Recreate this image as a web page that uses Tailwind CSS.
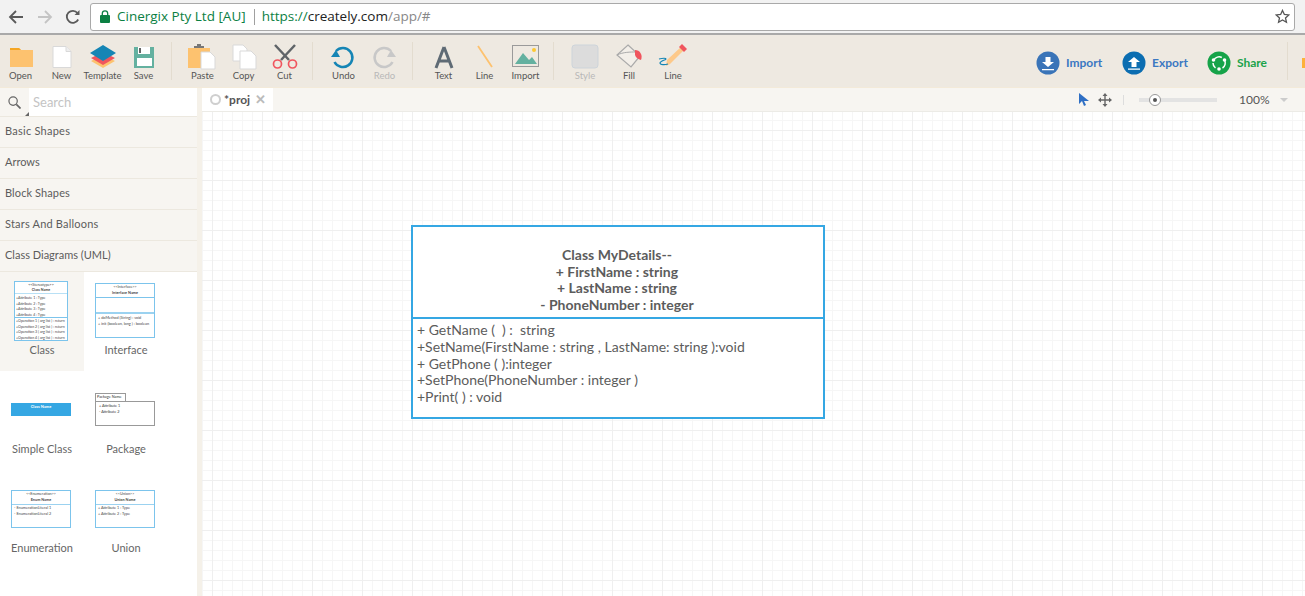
<!DOCTYPE html>
<html lang="en">

<head>
    <meta charset="UTF-8">
    <meta name="viewport" content="width=device-width, initial-scale=1.0">
    <title>Creately</title>
    <script src="https://cdn.jsdelivr.net/npm/@tailwindcss/browser@4"></script>
</head>

<body class="h-[596px] w-[1305px] overflow-hidden bg-white font-['Lato',sans-serif] text-[#555]">
    <!-- browser bar -->
    <div class="h-[35px] flex items-center bg-[#f2f2f2] border-b-2 border-[#a9a9a9]">
        <div class="w-[90px] h-[33px] flex items-center pl-[8px] gap-[13px] shrink-0">
            <svg class="w-[16px] h-[16px]" viewBox="0 0 16 16" fill="none" stroke="#5a5a5a" stroke-width="1.8"><path d="M15 8H2M8 2 2 8l6 6" /></svg>
            <svg class="w-[16px] h-[16px]" viewBox="0 0 16 16" fill="none" stroke="#c4c4c4" stroke-width="1.8"><path d="M1 8h13M8 2l6 6-6 6" /></svg>
            <svg class="w-[16px] h-[16px] -ml-[1px]" viewBox="0 0 16 16" fill="none" stroke="#5a5a5a" stroke-width="1.8"><path d="M13.2 10.5A6 6 0 1 1 12.5 4" /><path d="M14.5 1v5h-5z" fill="#5a5a5a" stroke="none" /></svg>
        </div>
        <div class="w-[1205px] h-[28px] flex items-center bg-white border border-[#a9a9a9] rounded-[3px] pl-[9px] pr-[4px] text-[14px] font-['Open_Sans',sans-serif]">
            <svg class="w-[10px] h-[13px] mr-[7px]" viewBox="0 0 10 13"><path d="M2.3 6V3.6a2.7 2.7 0 0 1 5.4 0V6" fill="none" stroke="#0b8043" stroke-width="1.3" /><rect y="5" width="10" height="8" rx="1" fill="#0b8043" /></svg>
            <span class="text-[#0b8043] text-[13.5px]">Cinergix Pty Ltd [AU]</span>
            <span class="w-px h-[16px] bg-[#a0a0a0] ml-[8px] mr-[7px]"></span>
            <span class="text-[13.5px] text-[#0b8043]">https://<span class="text-[#222]">creately.com</span><span class="text-[#888]">/app/#</span></span>
            <svg class="w-[15px] h-[15px] ml-auto" viewBox="0 0 16 16" fill="none" stroke="#555" stroke-width="1.4"><path d="m8 1.5 2 4.3 4.7.5-3.5 3.2 1 4.6L8 11.7l-4.2 2.4 1-4.6L1.300 6.300 6 5.800z" /></svg>
        </div>
    </div>

    <!-- toolbar -->
    <div class="h-[52px] flex bg-[#eee9e1] text-[9.5px] text-[#555] leading-[12px]">
        <div class="w-[164px] flex">
            <div class="w-[41px] flex flex-col items-center pt-[9px]">
                <svg class="w-[30px] h-[26px]" viewBox="0 0 30 26"><path d="M4 4h9l2 2h12v17H4z" fill="#fdc26f" /><path d="M4 4h9l2 2H4z" fill="#f5a623" /></svg>
                <span>Open</span>
            </div>
            <div class="w-[41px] flex flex-col items-center pt-[9px]">
                <svg class="w-[30px] h-[26px]" viewBox="0 0 30 26"><path d="M6 2.500h13l5 5v16H6z" fill="#fff" stroke="#d9d9d9" /><path d="M19 2.500v5h5" fill="#eee" stroke="#d9d9d9" /></svg>
                <span>New</span>
            </div>
            <div class="w-[41px] flex flex-col items-center pt-[9px]">
                <svg class="w-[30px] h-[26px]" viewBox="0 0 30 26"><path d="m15 11 12 6-12 7-12-7z" fill="#fdc26f" /><path d="m15 8 12 6-12 7-12-7z" fill="#f0555e" /><path d="m15 1 13 8-13 8L2 9z" fill="#1585b5" /></svg>
                <span>Template</span>
            </div>
            <div class="w-[41px] flex flex-col items-center pt-[9px]">
                <svg class="w-[30px] h-[26px]" viewBox="0 0 30 26"><path d="M5 3h20v21H5z" fill="#64b1a0" /><path d="M9 3h12v7H9zM8 14h15v8H8z" fill="#fff" /><path d="M10 4h2v5h-2z" fill="#666" /></svg>
                <span>Save</span>
            </div>
        </div>
        <div class="w-px h-[38px] mt-[7px] mx-[7px] bg-[#e3dccf]"></div>
        <div class="w-[123px] flex ml-[3px]">
            <div class="w-[41px] flex flex-col items-center pt-[9px]">
                <svg class="w-[30px] h-[26px]" viewBox="0 0 30 26"><path d="M0 4h22v20H0z" fill="#fdc26f" /><path d="M6 4h10V2h-3V0H9v2H6z" fill="#777" /><path d="M13 8h9l5 5v12H13z" fill="#fff" stroke="#d9d9d9" /></svg>
                <span>Paste</span>
            </div>
            <div class="w-[41px] flex flex-col items-center pt-[9px]">
                <svg class="w-[30px] h-[26px]" viewBox="0 0 30 26"><path d="M4 1h10l4 4v12H4z" fill="#fff" stroke="#d9d9d9" /><path d="M11 7h11l5 5v13H11z" fill="#fff" stroke="#d9d9d9" /></svg>
                <span>Copy</span>
            </div>
            <div class="w-[41px] flex flex-col items-center pt-[9px]">
                <svg class="w-[30px] h-[26px]" viewBox="0 0 30 26"><path d="M5 1l14 15M25 1 11 16" stroke="#5f6468" stroke-width="2.500" fill="none" /><circle cx="7.500" cy="20" r="4" fill="none" stroke="#f0555e" stroke-width="1.700" /><circle cx="22.500" cy="20" r="4" fill="none" stroke="#f0555e" stroke-width="1.700" /></svg>
                <span>Cut</span>
            </div>
        </div>
        <div class="w-px h-[38px] mt-[7px] mx-[7px] bg-[#e3dccf]"></div>
        <div class="w-[82px] flex ml-[3px]">
            <div class="w-[41px] flex flex-col items-center pt-[9px]">
                <svg class="w-[30px] h-[26px] -translate-x-[2px]" viewBox="0 0 30 26"><path d="M9 7a9.500 9.500 0 1 1-1.500 11" fill="none" stroke="#1585b5" stroke-width="2.500" /><path d="M4 13h9l-4-7z" fill="#1585b5" /></svg>
                <span>Undo</span>
            </div>
            <div class="w-[41px] flex flex-col items-center pt-[9px] text-[#b8b8b8]">
                <svg class="w-[30px] h-[26px]" viewBox="0 0 30 26"><path d="M21 7a9.500 9.500 0 1 0 1.500 11" fill="none" stroke="#c8c8c8" stroke-width="2.500" /><path d="M26 13h-9l4-7z" fill="#c8c8c8" /></svg>
                <span>Redo</span>
            </div>
        </div>
        <div class="w-px h-[38px] mt-[7px] mx-[7px] bg-[#e3dccf]"></div>
        <div class="w-[123px] flex ml-[3px]">
            <div class="w-[41px] flex flex-col items-center pt-[9px]">
                <svg class="w-[30px] h-[26px]" viewBox="0 0 30 26"><path d="M15 3 7 24M15 3l8 21M10 17h10" fill="none" stroke="#5f6b75" stroke-width="3" /></svg>
                <span>Text</span>
            </div>
            <div class="w-[41px] flex flex-col items-center pt-[9px]">
                <svg class="w-[30px] h-[26px]" viewBox="0 0 30 26"><path d="m8 2 14 21" fill="none" stroke="#fdc26f" stroke-width="1.800" /></svg>
                <span>Line</span>
            </div>
            <div class="w-[41px] flex flex-col items-center pt-[9px]">
                <svg class="w-[30px] h-[26px]" viewBox="0 0 30 26"><rect x="1.500" y="1.500" width="26" height="21" fill="none" stroke="#9a9a9a" /><path d="m4 20 8-11 6 7 3-3 5 7z" fill="#64b1a0" /><circle cx="23" cy="6" r="2" fill="#fdc832" /></svg>
                <span>Import</span>
            </div>
        </div>
        <div class="w-px h-[38px] mt-[7px] mx-[7px] bg-[#e3dccf]"></div>
        <div class="flex ml-[2px]">
            <div class="w-[44px] flex flex-col items-center pt-[9px] text-[#b8b8b8]">
                <svg class="w-[30px] h-[26px]" viewBox="0 0 30 26"><rect x="2" y="1" width="26" height="23" rx="3" fill="#dcdcdc" stroke="#cdd4da" /></svg>
                <span>Style</span>
            </div>
            <div class="w-[44px] flex flex-col items-center pt-[9px]">
                <svg class="w-[30px] h-[26px]" viewBox="0 0 30 26"><path d="m14 1 12 11-9 11L3 11z" fill="#f3efe9" stroke="#aaa" stroke-width="1.200" /><path d="M3 11c6-3 14-3 18-3" fill="none" stroke="#aaa" /><path d="M21 6c5 0 8 5 6 10-3-1-5-2-6-5z" fill="#f0555e" /></svg>
                <span>Fill</span>
            </div>
            <div class="w-[44px] flex flex-col items-center pt-[9px]">
                <svg class="w-[30px] h-[26px]" viewBox="0 0 30 26"><path d="m12 20 15-15-3-3L9 16l-1 6z" fill="#fdc98a" /><path d="m24 0 5 5-3 3-5-5z" fill="#f0555e" /><path d="M1 15c4-1 7-1 7 0s-6 2-6 4 5 2 8 1" fill="none" stroke="#1585b5" stroke-width="1.200" /></svg>
                <span>Line</span>
            </div>
        </div>

        <div class="ml-auto flex items-center h-[52px] pt-[4px] text-[12px] font-bold leading-none">
            <div class="flex items-center mr-[20px] text-[#3b78c2]">
                <svg class="w-[24px] h-[24px] mr-[6px]" viewBox="0 0 24 24"><circle cx="12" cy="12" r="11.500" fill="#3a74b8" /><path d="M9.500 6h5v5H18l-6 5-6-5h3.500zM6 18h12v1.200H6z" fill="#fff" /></svg>
                <span>Import</span>
            </div>
            <div class="flex items-center mr-[19px] text-[#3b78c2]">
                <svg class="w-[24px] h-[24px] mr-[6px]" viewBox="0 0 24 24"><circle cx="12" cy="12" r="11.500" fill="#0b6db1" /><path d="M9.500 16h5v-5H18l-6-5-6 5h3.500zM6 17.500h12v1.200H6z" fill="#fff" /></svg>
                <span>Export</span>
            </div>
            <div class="flex items-center mr-[20px] text-[#1ba34a]">
                <svg class="w-[24px] h-[24px] mr-[6px]" viewBox="0 0 24 24"><circle cx="12" cy="12" r="11.500" fill="#16a349" /><path d="M6.800 9a6 6 0 0 1 8-2.500M17.500 9a6 6 0 0 1-2 8M8.500 17a6 6 0 0 1-2.500-5" fill="none" stroke="#fff" stroke-width="1.500" /><circle cx="12" cy="18" r="1.800" fill="#fff" /><circle cx="6.500" cy="9" r="1.800" fill="#fff" /><circle cx="17.500" cy="9" r="1.800" fill="#fff" /></svg>
                <span>Share</span>
            </div>
            <div class="w-px h-[38px] -mt-[4px] bg-[#e3dccf]"></div>
            <div class="w-[3px] h-[10px] ml-[14px] bg-[#fdb13b]"></div>
        </div>
    </div>

    <div class="h-[509px] flex border-t border-[#f3ead9]">
        <!-- sidebar -->
        <div class="w-[197px] shrink-0 text-[11px] text-[#5c5c5c]">
            <div class="h-[29px] flex bg-[#f7f5f1] border-b border-[#ece8df]">
                <div class="w-[29px] relative flex items-center justify-center">
                    <svg class="w-[13px] h-[13px]" viewBox="0 0 14 14" fill="none" stroke="#666" stroke-width="1.300"><circle cx="5.500" cy="5.500" r="4.500" /><path d="m9 9 4.500 4.500" stroke-width="1.800" /></svg>
                    <div class="absolute right-[0px] bottom-[0px] w-0 h-0 border-l-[4px] border-b-[4px] border-l-transparent border-b-[#666]"></div>
                </div>
                <div class="flex-1 bg-white pl-[4px] pt-[1px] flex items-center text-[13px] text-[#c4c4c4]">Search</div>
            </div>
            <div class="h-[31px] flex items-center pl-[5px] pb-[1px] tracking-[0.25px] bg-[#f7f5f1] border-b border-[#ece8df]">Basic Shapes</div>
            <div class="h-[31px] flex items-center pl-[5px] pb-[1px] bg-[#f7f5f1] border-b border-[#ece8df]">Arrows</div>
            <div class="h-[31px] flex items-center pl-[5px] pb-[1px] tracking-[0.1px] bg-[#f7f5f1] border-b border-[#ece8df]">Block Shapes</div>
            <div class="h-[31px] flex items-center pl-[5px] pb-[1px] tracking-[0.2px] bg-[#f7f5f1] border-b border-[#ece8df]">Stars And Balloons</div>
            <div class="h-[31px] flex items-center pl-[5px] pb-[1px] bg-[#f7f5f1] border-b border-[#ece8df]">Class Diagrams (UML)</div>

            <div class="grid grid-cols-[84px_84px] auto-rows-[99px] text-[11px] text-center text-[#666]">
                <div class="bg-[#f7f5f1] flex flex-col items-center pt-[9px]">
                    <div class="w-[54px] h-[60px] mr-[2px] bg-white border border-[#7cc4ec] text-[3.600px] leading-[5px] text-[#444] text-left">
                        <div class="text-center h-[12px] border-b border-[#b8e0f5]">&lt;&lt;Stereotype&gt;&gt;<br><b>Class Name</b></div>
                        <div class="h-[24px] border-b border-[#7cc4ec] pl-[1px] pt-[1px] leading-[5.500px]">+Attribute 1 : Type<br>+Attribute 2 : Type<br>+Attribute 3 : Type<br>+Attribute 4 : Type</div>
                        <div class="pl-[1px] whitespace-nowrap leading-[5.500px]">+Operation 1 ( arg list ) : return<br>+Operation 2 ( arg list ) : return<br>+Operation 3 ( arg list ) : return<br>+Operation 4 ( arg list ) : return</div>
                    </div>
                    <span class="mt-[1px]">Class</span>
                </div>
                <div class="flex flex-col items-center pt-[11px]">
                    <div class="w-[60px] h-[55px] mr-[2px] bg-white border border-[#7cc4ec] text-[3.800px] leading-[6px] text-[#444] text-left">
                        <div class="text-center h-[14px] border-b border-[#7cc4ec]">&lt;&lt;Interface&gt;&gt;<br><b>Interface Name</b></div>
                        <div class="h-[16px] border-b-2 border-[#9bd2f0]"></div>
                        <div class="pl-[2px] pt-[1px] whitespace-nowrap">+ doMethod (String) : void<br>+ init (boolean, long ) : boolean</div>
                    </div>
                    <span class="mt-[4px]">Interface</span>
                </div>
                <div class="flex flex-col items-center pt-[32px]">
                    <div class="w-[60px] h-[13px] mr-[2px] bg-[#35a7e3] text-[4px] leading-[8px] font-bold text-white">Class Name</div>
                    <span class="mt-[25px]">Simple Class</span>
                </div>
                <div class="flex flex-col items-center pt-[22px]">
                    <div class="w-[60px] mr-[2px] text-[3.800px] leading-[6px] text-[#333] text-left">
                        <div class="w-[31px] h-[8px] bg-white border border-[#999] border-b-0 whitespace-nowrap pl-[1px]">Package Name</div>
                        <div class="h-[25px] bg-white border border-[#999] pl-[3px] pt-[1px] leading-[5.500px]">+ Attribute 1<br>- Attribute 2</div>
                    </div>
                    <span class="mt-[15px]">Package</span>
                </div>
                <div class="flex flex-col items-center pt-[20px]">
                    <div class="w-[60px] h-[38px] mr-[2px] bg-white border border-[#7cc4ec] text-[3.800px] leading-[6px] text-[#444] text-left">
                        <div class="text-center h-[14px] border-b border-[#9bd2f0]">&lt;&lt;Enumeration&gt;&gt;<br><b>Enum Name</b></div>
                        <div class="pl-[2px]">- EnumerationLiteral 1<br>- EnumerationLiteral 2</div>
                    </div>
                    <span class="mt-[12px]">Enumeration</span>
                </div>
                <div class="flex flex-col items-center pt-[20px]">
                    <div class="w-[60px] h-[38px] mr-[2px] bg-white border border-[#7cc4ec] text-[3.800px] leading-[6px] text-[#444] text-left">
                        <div class="text-center h-[14px] border-b border-[#9bd2f0]">&lt;&lt;Union&gt;&gt;<br><b>Union Name</b></div>
                        <div class="pl-[2px]">+ Attribute 1 : Type<br>+ Attribute 2 : Type</div>
                    </div>
                    <span class="mt-[12px]">Union</span>
                </div>
            </div>
        </div>
        <div class="w-[5px] shrink-0 bg-[#f5f1e9]"></div>

        <!-- editor -->
        <div class="flex-1 flex flex-col">
            <div class="h-[24px] flex bg-[#f7f5f1] text-[#555] border-b border-[#ecebe6]">
                <div class="w-[71px] bg-white flex items-center pl-[8px] text-[12px] font-bold">
                    <span class="w-[11px] h-[11px] rounded-full border-2 border-[#cfcfcf] mr-[3px]"></span>
                    <span>*proj</span>
                    <span class="ml-[5px] text-[#bbb] text-[13px] leading-none">✕</span>
                </div>
                <div class="ml-auto flex items-center">
                    <svg class="w-[10px] h-[13px] mr-[9px]" viewBox="0 0 10 13"><path d="M0 0v11l3-3 2 5 2-1-2-4h5z" fill="#2f6fc4" /></svg>
                    <svg class="w-[14px] h-[14px] mr-[11px]" viewBox="0 0 14 14" fill="#666"><path d="M6.300 3h1.400v8H6.300zM3 6.300h8v1.400H3zM7 0l2.500 3h-5zM7 14l-2.500-3h5zM0 7l3-2.500v5zM14 7l-3 2.500v-5z" /></svg>
                    <div class="w-px h-[10px] bg-[#ddd] mr-[15px]"></div>
                    <div class="relative w-[78px] h-[4px] bg-[#e3e3e3] mr-[22px]">
                        <div class="absolute left-[10px] top-[-4px] w-[12px] h-[12px] rounded-full bg-white border border-[#999] flex items-center justify-center"><span class="w-[4px] h-[4px] rounded-full bg-[#555]"></span></div>
                    </div>
                    <span class="text-[12px] w-[29px] mr-[12px]">100%</span>
                    <div class="w-0 h-0 mr-[17px] border-x-[4px] border-t-[4px] border-x-transparent border-t-[#ccc]"></div>
                </div>
            </div>
            <div class="relative flex-1 bg-white bg-[linear-gradient(#efefef_1px,transparent_1px),linear-gradient(90deg,#efefef_1px,transparent_1px),linear-gradient(#f6f6f6_1px,transparent_1px),linear-gradient(90deg,#f6f6f6_1px,transparent_1px)] bg-[size:50px_50px,50px_50px,10px_10px,10px_10px] bg-[position:0_18px,10px_0,0_8px,0_0]">
                <!-- class shape on canvas -->
                <div class="absolute left-[209px] top-[113px] w-[414px] h-[194px] bg-white border-2 border-[#35a7e3] text-[14px] leading-[16.800px] text-[#5c5c5c]">
                    <div class="h-[92px] border-b-2 border-[#35a7e3] flex flex-col justify-end text-center font-bold pb-[3px] pr-[2px]">
                        <div>Class MyDetails--</div>
                        <div>+ FirstName : string</div>
                        <div>+ LastName : string</div>
                        <div>- PhoneNumber : integer</div>
                    </div>
                    <div class="pl-[4px] pt-[3px] whitespace-pre">+ GetName (  ) :  string
+SetName(FirstName : string , LastName: string ):void
+ GetPhone ( ):integer
+SetPhone(PhoneNumber : integer )
+Print( ) : void</div>
                </div>
            </div>
        </div>
    </div>
</body>

</html>
